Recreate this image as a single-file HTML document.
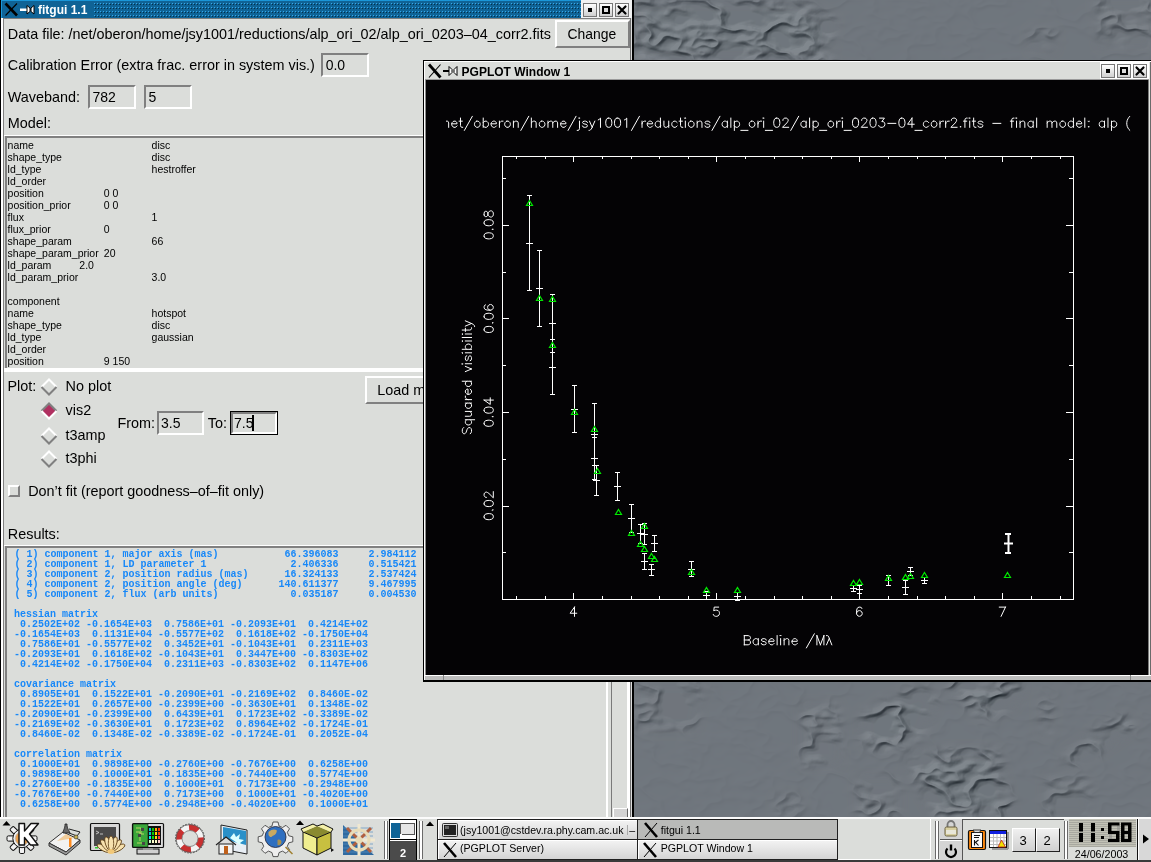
<!DOCTYPE html>
<html><head><meta charset="utf-8"><style>
html,body{margin:0;padding:0;width:1151px;height:862px;overflow:hidden;background:#70767d}
.t{position:absolute;white-space:pre;line-height:1;font-family:"Liberation Sans",sans-serif}
#desk{position:absolute;left:0;top:0;width:1151px;height:862px;background:#70767d}
#fit,#pg,#tb{position:absolute;left:0;top:0;will-change:transform}
#fit{width:634px;height:817px;overflow:hidden}
</style></head><body>
<div id="desk"><svg style="position:absolute;left:0;top:0" width="1151" height="862"><defs><filter id="emb" x="0" y="0" width="100%" height="100%" color-interpolation-filters="sRGB"><feTurbulence type="fractalNoise" baseFrequency="0.02 0.032" numOctaves="3" seed="5" result="n"/><feComponentTransfer in="n" result="t"><feFuncA type="table" tableValues="0 0 0 0 0 0.25 1 0.25 0 0 0 0 0"/></feComponentTransfer><feGaussianBlur in="t" stdDeviation="0.6" result="tb"/><feDiffuseLighting in="tb" surfaceScale="1.6" diffuseConstant="1.1" lighting-color="#fff" result="l"><feDistantLight azimuth="235" elevation="50"/></feDiffuseLighting><feColorMatrix in="l" type="matrix" values="0.52 0 0 0 0.0  0 0.52 0 0 0.025  0 0 0.52 0 0.05  0 0 0 0 1"/></filter><filter id="zb" x="-20%" y="-20%" width="140%" height="140%"><feGaussianBlur stdDeviation="5"/></filter><filter id="rb" x="-10%" y="-10%" width="120%" height="120%"><feGaussianBlur stdDeviation="0.45"/></filter><mask id="zm" maskUnits="userSpaceOnUse" x="0" y="0" width="1151" height="862"><rect width="1151" height="862" fill="#0c0c0c"/><g filter="url(#zb)"><path d="M634 0L800 0L835 20L830 62L634 62Z" fill="#fff" opacity="0.80"/><path d="M1095 0L1151 0L1151 45L1100 45Z" fill="#fff" opacity="0.56"/><path d="M1030 30L1055 30L1055 50L1030 50Z" fill="#fff" opacity="0.40"/><path d="M862 716L885 702L923 688L936 700L924 734L886 752L864 746Z" fill="#fff" opacity="0.80"/><path d="M945 682L1024 682L1013 706L989 718L972 711Z" fill="#fff" opacity="0.80"/><path d="M905 756L950 750L996 750L1006 785L1012 817L936 817L918 786Z" fill="#fff" opacity="0.80"/><path d="M1062 758L1100 728L1128 714L1136 726L1102 750L1070 766Z" fill="#fff" opacity="0.64"/><path d="M634 682L705 682L695 730L634 730Z" fill="#fff" opacity="0.40"/><path d="M802 705L838 705L840 765L802 765Z" fill="#fff" opacity="0.56"/><path d="M858 778L898 778L898 817L858 817Z" fill="#fff" opacity="0.56"/><path d="M1046 778L1088 778L1090 817L1046 817Z" fill="#fff" opacity="0.48"/><path d="M1040 700L1052 700L1052 735L1040 735Z" fill="#fff" opacity="0.40"/><path d="M776 796L800 796L800 817L776 817Z" fill="#fff" opacity="0.40"/></g></mask></defs><rect width="1151" height="862" filter="url(#emb)" mask="url(#zm)"/></svg></div>
<div id="fit">
<div style="position:absolute;left:0px;top:0px;width:634px;height:18px;background:#0f6396"></div>
<div style="position:absolute;left:1px;top:0px;width:632px;height:1px;background:#1a96d8"></div>
<div style="position:absolute;left:1px;top:0px;width:1px;height:18px;background:#1a96d8"></div>
<svg style="position:absolute;left:94px;top:1px" width="487" height="17"><defs><pattern id="tbd" width="3" height="4" patternUnits="userSpaceOnUse"><rect x="0" y="2" width="1" height="1" fill="#3aa8e8"/><rect x="1" y="3" width="1" height="1" fill="#073048"/></pattern></defs><rect width="487" height="17" fill="url(#tbd)"/></svg>
<div style="position:absolute;left:581px;top:0px;width:51px;height:18px;background:#f2f2f2"></div>
<div style="position:absolute;left:583px;top:3px;width:12px;height:12px;border:1px solid #777;background:linear-gradient(#fff,#cfcfcf)"></div>
<div style="position:absolute;left:599px;top:3px;width:12px;height:12px;border:1px solid #777;background:linear-gradient(#fff,#cfcfcf)"></div>
<div style="position:absolute;left:615px;top:3px;width:12px;height:12px;border:1px solid #777;background:linear-gradient(#fff,#cfcfcf)"></div>
<div style="position:absolute;left:588px;top:8px;width:4px;height:4px;background:#000"></div>
<div style="position:absolute;left:602px;top:6px;width:4px;height:4px;border:2px solid #000;background:#ddd"></div>
<svg style="position:absolute;left:616px;top:4px" width="12" height="12"><path d="M2.5 2.5L9.5 9.5M9.5 2.5L2.5 9.5" stroke="#000" stroke-width="2.2" stroke-linecap="round"/></svg>
<svg style="position:absolute;left:4px;top:2px" width="32" height="15"><path d="M1.5 1.5L13 13.5" stroke="#000" stroke-width="2.6"/><path d="M13 1.5L1.5 13.5" stroke="#000" stroke-width="1.1"/><rect x="16" y="6.5" width="7" height="2.5" fill="#fff"/><path d="M23 3.5L26 6V9.5L23 12ZM30 3.5L27 6V9.5L30 12Z" fill="#fff" stroke="#000" stroke-width="1"/></svg>
<div class="t" style="left:38px;top:4.14px;font-size:12px;color:#fff;font-weight:700;font-family:'Liberation Sans', sans-serif;">fitgui 1.1</div>
<div style="position:absolute;left:1px;top:18px;width:631px;height:850px;background:#dbddda"></div>
<div style="position:absolute;left:0px;top:0px;width:1px;height:862px;background:#000"></div>
<div style="position:absolute;left:632px;top:0px;width:2px;height:862px;background:#000"></div>
<div style="position:absolute;left:1px;top:18px;width:2px;height:850px;background:#fff"></div>
<div style="position:absolute;left:630px;top:18px;width:1px;height:850px;background:#707070"></div>
<div style="position:absolute;left:631px;top:18px;width:1px;height:850px;background:#dcdcdc"></div>
<div style="position:absolute;left:3px;top:18px;width:627px;height:1px;background:#808080"></div>
<div style="position:absolute;left:3px;top:18px;width:1px;height:850px;background:#808080"></div>
<div class="t" style="left:7.8px;top:26.61px;font-size:14.4px;color:#000;font-weight:400;font-family:'Liberation Sans', sans-serif;">Data file: /net/oberon/home/jsy1001/reductions/alp_ori_02/alp_ori_0203–04_corr2.fits</div>
<div style="position:absolute;left:555px;top:20px;width:71px;height:24px;border:2px solid;border-color:#fff #808080 #808080 #fff;background:#dbddda"></div>
<div class="t" style="left:567.5px;top:27.93px;font-size:13.9px;color:#000;font-weight:400;font-family:'Liberation Sans', sans-serif;">Change</div>
<div class="t" style="left:7.8px;top:57.51px;font-size:14.4px;color:#000;font-weight:400;font-family:'Liberation Sans', sans-serif;">Calibration Error (extra frac. error in system vis.)</div>
<div style="position:absolute;left:321px;top:53px;width:44px;height:20px;border:2px solid;border-color:#808080 #fff #fff #808080;background:#dbddda"></div>
<div class="t" style="left:325.7px;top:57.85px;font-size:14px;color:#000;font-weight:400;font-family:'Liberation Sans', sans-serif;">0.0</div>
<div class="t" style="left:7.8px;top:89.51px;font-size:14.4px;color:#000;font-weight:400;font-family:'Liberation Sans', sans-serif;">Waveband:</div>
<div style="position:absolute;left:88px;top:85px;width:44px;height:20px;border:2px solid;border-color:#808080 #fff #fff #808080;background:#dbddda"></div>
<div class="t" style="left:92.5px;top:89.85px;font-size:14px;color:#000;font-weight:400;font-family:'Liberation Sans', sans-serif;">782</div>
<div style="position:absolute;left:144px;top:85px;width:44px;height:20px;border:2px solid;border-color:#808080 #fff #fff #808080;background:#dbddda"></div>
<div class="t" style="left:148.5px;top:89.85px;font-size:14px;color:#000;font-weight:400;font-family:'Liberation Sans', sans-serif;">5</div>
<div class="t" style="left:7.8px;top:116.11px;font-size:14.4px;color:#000;font-weight:400;font-family:'Liberation Sans', sans-serif;">Model:</div>
<div style="position:absolute;left:4px;top:135px;width:626px;height:234px;border-top:1px solid #fff;border-bottom:2px solid #fff"></div>
<div style="position:absolute;left:5px;top:136px;width:625px;height:232px;border-top:2px solid #808080;border-left:2px solid #808080;box-sizing:border-box;overflow:hidden">
</div>
<div class="t" style="left:7.6px;top:139.61px;font-size:10.5px;color:#000;font-weight:400;font-family:'Liberation Sans', sans-serif;">name</div>
<div class="t" style="left:151.6px;top:139.61px;font-size:10.5px;color:#000;font-weight:400;font-family:'Liberation Sans', sans-serif;">disc</div>
<div class="t" style="left:7.6px;top:151.61px;font-size:10.5px;color:#000;font-weight:400;font-family:'Liberation Sans', sans-serif;">shape_type</div>
<div class="t" style="left:151.6px;top:151.61px;font-size:10.5px;color:#000;font-weight:400;font-family:'Liberation Sans', sans-serif;">disc</div>
<div class="t" style="left:7.6px;top:163.61px;font-size:10.5px;color:#000;font-weight:400;font-family:'Liberation Sans', sans-serif;">ld_type</div>
<div class="t" style="left:151.6px;top:163.61px;font-size:10.5px;color:#000;font-weight:400;font-family:'Liberation Sans', sans-serif;">hestroffer</div>
<div class="t" style="left:7.6px;top:175.61px;font-size:10.5px;color:#000;font-weight:400;font-family:'Liberation Sans', sans-serif;">ld_order</div>
<div class="t" style="left:7.6px;top:187.61px;font-size:10.5px;color:#000;font-weight:400;font-family:'Liberation Sans', sans-serif;">position</div>
<div class="t" style="left:103.8px;top:187.61px;font-size:10.5px;color:#000;font-weight:400;font-family:'Liberation Sans', sans-serif;">0 0</div>
<div class="t" style="left:7.6px;top:199.61px;font-size:10.5px;color:#000;font-weight:400;font-family:'Liberation Sans', sans-serif;">position_prior</div>
<div class="t" style="left:103.8px;top:199.61px;font-size:10.5px;color:#000;font-weight:400;font-family:'Liberation Sans', sans-serif;">0 0</div>
<div class="t" style="left:7.6px;top:211.61px;font-size:10.5px;color:#000;font-weight:400;font-family:'Liberation Sans', sans-serif;">flux</div>
<div class="t" style="left:151.6px;top:211.61px;font-size:10.5px;color:#000;font-weight:400;font-family:'Liberation Sans', sans-serif;">1</div>
<div class="t" style="left:7.6px;top:223.61px;font-size:10.5px;color:#000;font-weight:400;font-family:'Liberation Sans', sans-serif;">flux_prior</div>
<div class="t" style="left:103.8px;top:223.61px;font-size:10.5px;color:#000;font-weight:400;font-family:'Liberation Sans', sans-serif;">0</div>
<div class="t" style="left:7.6px;top:235.61px;font-size:10.5px;color:#000;font-weight:400;font-family:'Liberation Sans', sans-serif;">shape_param</div>
<div class="t" style="left:151.6px;top:235.61px;font-size:10.5px;color:#000;font-weight:400;font-family:'Liberation Sans', sans-serif;">66</div>
<div class="t" style="left:7.6px;top:247.61px;font-size:10.5px;color:#000;font-weight:400;font-family:'Liberation Sans', sans-serif;">shape_param_prior</div>
<div class="t" style="left:103.8px;top:247.61px;font-size:10.5px;color:#000;font-weight:400;font-family:'Liberation Sans', sans-serif;">20</div>
<div class="t" style="left:7.6px;top:259.61px;font-size:10.5px;color:#000;font-weight:400;font-family:'Liberation Sans', sans-serif;">ld_param</div>
<div class="t" style="left:79.3px;top:259.61px;font-size:10.5px;color:#000;font-weight:400;font-family:'Liberation Sans', sans-serif;">2.0</div>
<div class="t" style="left:7.6px;top:271.61px;font-size:10.5px;color:#000;font-weight:400;font-family:'Liberation Sans', sans-serif;">ld_param_prior</div>
<div class="t" style="left:151.6px;top:271.61px;font-size:10.5px;color:#000;font-weight:400;font-family:'Liberation Sans', sans-serif;">3.0</div>
<div class="t" style="left:7.6px;top:295.61px;font-size:10.5px;color:#000;font-weight:400;font-family:'Liberation Sans', sans-serif;">component</div>
<div class="t" style="left:7.6px;top:307.61px;font-size:10.5px;color:#000;font-weight:400;font-family:'Liberation Sans', sans-serif;">name</div>
<div class="t" style="left:151.6px;top:307.61px;font-size:10.5px;color:#000;font-weight:400;font-family:'Liberation Sans', sans-serif;">hotspot</div>
<div class="t" style="left:7.6px;top:319.61px;font-size:10.5px;color:#000;font-weight:400;font-family:'Liberation Sans', sans-serif;">shape_type</div>
<div class="t" style="left:151.6px;top:319.61px;font-size:10.5px;color:#000;font-weight:400;font-family:'Liberation Sans', sans-serif;">disc</div>
<div class="t" style="left:7.6px;top:331.61px;font-size:10.5px;color:#000;font-weight:400;font-family:'Liberation Sans', sans-serif;">ld_type</div>
<div class="t" style="left:151.6px;top:331.61px;font-size:10.5px;color:#000;font-weight:400;font-family:'Liberation Sans', sans-serif;">gaussian</div>
<div class="t" style="left:7.6px;top:343.61px;font-size:10.5px;color:#000;font-weight:400;font-family:'Liberation Sans', sans-serif;">ld_order</div>
<div class="t" style="left:7.6px;top:355.61px;font-size:10.5px;color:#000;font-weight:400;font-family:'Liberation Sans', sans-serif;">position</div>
<div class="t" style="left:103.8px;top:355.61px;font-size:10.5px;color:#000;font-weight:400;font-family:'Liberation Sans', sans-serif;">9 150</div>
<div style="position:absolute;left:4px;top:368px;width:626px;height:2px;background:#fff"></div>
<div class="t" style="left:7.5px;top:378.71px;font-size:14.4px;color:#000;font-weight:400;font-family:'Liberation Sans', sans-serif;">Plot:</div>
<svg style="position:absolute;left:40px;top:378.4px" width="18" height="18"><path d="M1.5 9L9 1.5L16.5 9" fill="none" stroke="#fff" stroke-width="2"/><path d="M1.5 9L9 16.5L16.5 9" fill="none" stroke="#808080" stroke-width="2"/></svg>
<div class="t" style="left:65.6px;top:379.31px;font-size:14.4px;color:#000;font-weight:400;font-family:'Liberation Sans', sans-serif;">No plot</div>
<svg style="position:absolute;left:40px;top:402.2px" width="18" height="18"><path d="M9 1.5L16.5 9L9 16.5L1.5 9Z" fill="#b03060"/><path d="M1.5 9L9 1.5L16.5 9" fill="none" stroke="#808080" stroke-width="2"/><path d="M1.5 9L9 16.5L16.5 9" fill="none" stroke="#fff" stroke-width="2"/></svg>
<div class="t" style="left:65.6px;top:403.11px;font-size:14.4px;color:#000;font-weight:400;font-family:'Liberation Sans', sans-serif;">vis2</div>
<svg style="position:absolute;left:40px;top:426.6px" width="18" height="18"><path d="M1.5 9L9 1.5L16.5 9" fill="none" stroke="#fff" stroke-width="2"/><path d="M1.5 9L9 16.5L16.5 9" fill="none" stroke="#808080" stroke-width="2"/></svg>
<div class="t" style="left:65.6px;top:427.51px;font-size:14.4px;color:#000;font-weight:400;font-family:'Liberation Sans', sans-serif;">t3amp</div>
<svg style="position:absolute;left:40px;top:450.4px" width="18" height="18"><path d="M1.5 9L9 1.5L16.5 9" fill="none" stroke="#fff" stroke-width="2"/><path d="M1.5 9L9 16.5L16.5 9" fill="none" stroke="#808080" stroke-width="2"/></svg>
<div class="t" style="left:65.6px;top:451.31px;font-size:14.4px;color:#000;font-weight:400;font-family:'Liberation Sans', sans-serif;">t3phi</div>
<div class="t" style="left:117.5px;top:415.61px;font-size:14.4px;color:#000;font-weight:400;font-family:'Liberation Sans', sans-serif;">From:</div>
<div style="position:absolute;left:157px;top:411px;width:43px;height:20px;border:2px solid;border-color:#808080 #fff #fff #808080;background:#dbddda"></div>
<div class="t" style="left:161px;top:415.95px;font-size:14px;color:#000;font-weight:400;font-family:'Liberation Sans', sans-serif;">3.5</div>
<div class="t" style="left:207.7px;top:415.61px;font-size:14.4px;color:#000;font-weight:400;font-family:'Liberation Sans', sans-serif;">To:</div>
<div style="position:absolute;left:230px;top:411px;width:46px;height:22px;border:1px solid #000"></div>
<div style="position:absolute;left:231px;top:412px;width:42px;height:18px;border:2px solid;border-color:#808080 #fff #fff #808080;background:#dbddda"></div>
<div class="t" style="left:234px;top:415.95px;font-size:14px;color:#000;font-weight:400;font-family:'Liberation Sans', sans-serif;">7.5</div>
<div style="position:absolute;left:252px;top:415px;width:2px;height:16px;background:#000"></div>
<div style="position:absolute;left:365px;top:376px;width:66px;height:24px;border:2px solid;border-color:#fff #808080 #808080 #fff;background:#dbddda"></div>
<div class="t" style="left:377.2px;top:382.61px;font-size:14.4px;color:#000;font-weight:400;font-family:'Liberation Sans', sans-serif;">Load model</div>
<div style="position:absolute;left:8px;top:485px;width:8px;height:8px;border:2px solid;border-color:#fff #808080 #808080 #fff;background:#dbddda"></div>
<div class="t" style="left:28.2px;top:483.71px;font-size:14.4px;color:#000;font-weight:400;font-family:'Liberation Sans', sans-serif;">Don’t fit (report goodness–of–fit only)</div>
<div class="t" style="left:7.8px;top:527.21px;font-size:14.4px;color:#000;font-weight:400;font-family:'Liberation Sans', sans-serif;">Results:</div>
<div style="position:absolute;left:4px;top:545px;width:626px;height:300px;border-top:1px solid #fff"></div>
<div style="position:absolute;left:5px;top:546px;width:625px;height:300px;border-top:2px solid #808080;border-left:2px solid #808080;box-sizing:border-box"></div>
<div style="position:absolute;left:606px;top:546px;width:2px;height:300px;background:#fff"></div>
<div style="position:absolute;left:611px;top:546px;width:1px;height:300px;background:#7a7a7a"></div>
<div style="position:absolute;left:627px;top:546px;width:3px;height:300px;background:#fff"></div>
<div style="position:absolute;left:613px;top:808px;width:13px;height:12px;border-top:1px solid #fff;border-left:1px solid #fff;border-right:1px solid #666;background:#d4d4d4"></div>
<div class="t" style="left:14.5px;top:550.04px;font-size:10px;color:#1888f8;font-weight:700;font-family:'Liberation Mono', monospace;">(&#160;1)&#160;component&#160;1,&#160;major&#160;axis&#160;(mas)&#160;&#160;&#160;&#160;&#160;&#160;&#160;&#160;&#160;&#160;&#160;66.396083&#160;&#160;&#160;&#160;&#160;2.984112</div>
<div class="t" style="left:14.5px;top:560.04px;font-size:10px;color:#1888f8;font-weight:700;font-family:'Liberation Mono', monospace;">(&#160;2)&#160;component&#160;1,&#160;LD&#160;parameter&#160;1&#160;&#160;&#160;&#160;&#160;&#160;&#160;&#160;&#160;&#160;&#160;&#160;&#160;&#160;2.406336&#160;&#160;&#160;&#160;&#160;0.515421</div>
<div class="t" style="left:14.5px;top:570.04px;font-size:10px;color:#1888f8;font-weight:700;font-family:'Liberation Mono', monospace;">(&#160;3)&#160;component&#160;2,&#160;position&#160;radius&#160;(mas)&#160;&#160;&#160;&#160;&#160;&#160;16.324133&#160;&#160;&#160;&#160;&#160;2.537424</div>
<div class="t" style="left:14.5px;top:580.04px;font-size:10px;color:#1888f8;font-weight:700;font-family:'Liberation Mono', monospace;">(&#160;4)&#160;component&#160;2,&#160;position&#160;angle&#160;(deg)&#160;&#160;&#160;&#160;&#160;&#160;140.611377&#160;&#160;&#160;&#160;&#160;9.467995</div>
<div class="t" style="left:14.5px;top:590.04px;font-size:10px;color:#1888f8;font-weight:700;font-family:'Liberation Mono', monospace;">(&#160;5)&#160;component&#160;2,&#160;flux&#160;(arb&#160;units)&#160;&#160;&#160;&#160;&#160;&#160;&#160;&#160;&#160;&#160;&#160;&#160;0.035187&#160;&#160;&#160;&#160;&#160;0.004530</div>
<div class="t" style="left:14px;top:610.04px;font-size:10px;color:#1888f8;font-weight:700;font-family:'Liberation Mono', monospace;">hessian&#160;matrix</div>
<div class="t" style="left:14px;top:620.04px;font-size:10px;color:#1888f8;font-weight:700;font-family:'Liberation Mono', monospace;">&#160;0.2502E+02&#160;-0.1654E+03&#160;&#160;0.7586E+01&#160;-0.2093E+01&#160;&#160;0.4214E+02</div>
<div class="t" style="left:14px;top:630.04px;font-size:10px;color:#1888f8;font-weight:700;font-family:'Liberation Mono', monospace;">-0.1654E+03&#160;&#160;0.1131E+04&#160;-0.5577E+02&#160;&#160;0.1618E+02&#160;-0.1750E+04</div>
<div class="t" style="left:14px;top:640.04px;font-size:10px;color:#1888f8;font-weight:700;font-family:'Liberation Mono', monospace;">&#160;0.7586E+01&#160;-0.5577E+02&#160;&#160;0.3452E+01&#160;-0.1043E+01&#160;&#160;0.2311E+03</div>
<div class="t" style="left:14px;top:650.04px;font-size:10px;color:#1888f8;font-weight:700;font-family:'Liberation Mono', monospace;">-0.2093E+01&#160;&#160;0.1618E+02&#160;-0.1043E+01&#160;&#160;0.3447E+00&#160;-0.8303E+02</div>
<div class="t" style="left:14px;top:660.04px;font-size:10px;color:#1888f8;font-weight:700;font-family:'Liberation Mono', monospace;">&#160;0.4214E+02&#160;-0.1750E+04&#160;&#160;0.2311E+03&#160;-0.8303E+02&#160;&#160;0.1147E+06</div>
<div class="t" style="left:14px;top:680.04px;font-size:10px;color:#1888f8;font-weight:700;font-family:'Liberation Mono', monospace;">covariance&#160;matrix</div>
<div class="t" style="left:14px;top:690.04px;font-size:10px;color:#1888f8;font-weight:700;font-family:'Liberation Mono', monospace;">&#160;0.8905E+01&#160;&#160;0.1522E+01&#160;-0.2090E+01&#160;-0.2169E+02&#160;&#160;0.8460E-02</div>
<div class="t" style="left:14px;top:700.04px;font-size:10px;color:#1888f8;font-weight:700;font-family:'Liberation Mono', monospace;">&#160;0.1522E+01&#160;&#160;0.2657E+00&#160;-0.2399E+00&#160;-0.3630E+01&#160;&#160;0.1348E-02</div>
<div class="t" style="left:14px;top:710.04px;font-size:10px;color:#1888f8;font-weight:700;font-family:'Liberation Mono', monospace;">-0.2090E+01&#160;-0.2399E+00&#160;&#160;0.6439E+01&#160;&#160;0.1723E+02&#160;-0.3389E-02</div>
<div class="t" style="left:14px;top:720.04px;font-size:10px;color:#1888f8;font-weight:700;font-family:'Liberation Mono', monospace;">-0.2169E+02&#160;-0.3630E+01&#160;&#160;0.1723E+02&#160;&#160;0.8964E+02&#160;-0.1724E-01</div>
<div class="t" style="left:14px;top:730.04px;font-size:10px;color:#1888f8;font-weight:700;font-family:'Liberation Mono', monospace;">&#160;0.8460E-02&#160;&#160;0.1348E-02&#160;-0.3389E-02&#160;-0.1724E-01&#160;&#160;0.2052E-04</div>
<div class="t" style="left:14px;top:750.04px;font-size:10px;color:#1888f8;font-weight:700;font-family:'Liberation Mono', monospace;">correlation&#160;matrix</div>
<div class="t" style="left:14px;top:760.04px;font-size:10px;color:#1888f8;font-weight:700;font-family:'Liberation Mono', monospace;">&#160;0.1000E+01&#160;&#160;0.9898E+00&#160;-0.2760E+00&#160;-0.7676E+00&#160;&#160;0.6258E+00</div>
<div class="t" style="left:14px;top:770.04px;font-size:10px;color:#1888f8;font-weight:700;font-family:'Liberation Mono', monospace;">&#160;0.9898E+00&#160;&#160;0.1000E+01&#160;-0.1835E+00&#160;-0.7440E+00&#160;&#160;0.5774E+00</div>
<div class="t" style="left:14px;top:780.04px;font-size:10px;color:#1888f8;font-weight:700;font-family:'Liberation Mono', monospace;">-0.2760E+00&#160;-0.1835E+00&#160;&#160;0.1000E+01&#160;&#160;0.7173E+00&#160;-0.2948E+00</div>
<div class="t" style="left:14px;top:790.04px;font-size:10px;color:#1888f8;font-weight:700;font-family:'Liberation Mono', monospace;">-0.7676E+00&#160;-0.7440E+00&#160;&#160;0.7173E+00&#160;&#160;0.1000E+01&#160;-0.4020E+00</div>
<div class="t" style="left:14px;top:800.04px;font-size:10px;color:#1888f8;font-weight:700;font-family:'Liberation Mono', monospace;">&#160;0.6258E+00&#160;&#160;0.5774E+00&#160;-0.2948E+00&#160;-0.4020E+00&#160;&#160;0.1000E+01</div>
</div>
<div id="pg">
<div style="position:absolute;left:423px;top:60px;width:728px;height:622px;background:#000"></div>
<div style="position:absolute;left:424px;top:61px;width:727px;height:620px;background:#fff"></div>
<div style="position:absolute;left:425px;top:62px;width:726px;height:618px;background:#dbddda"></div>
<svg style="position:absolute;left:427px;top:63px" width="34" height="16"><path d="M2 1.5L13.5 14.5" stroke="#000" stroke-width="2.8"/><path d="M13.5 1.5L2 14.5" stroke="#000" stroke-width="1.1"/><rect x="16" y="7" width="6" height="2" fill="#000"/><path d="M22 3.5L25 6.5V9.5L22 12.5ZM30 3.5L27 6.5V9.5L30 12.5Z" fill="#fff" stroke="#000" stroke-width="1"/></svg>
<div class="t" style="left:461.6px;top:65.54px;font-size:12px;color:#000;font-weight:700;font-family:'Liberation Sans', sans-serif;">PGPLOT Window 1</div>
<div style="position:absolute;left:1100px;top:61px;width:51px;height:19px;background:#fff"></div>
<div style="position:absolute;left:1101px;top:64px;width:12px;height:12px;border:1px solid #777;background:linear-gradient(#fff,#d0d0d0)"></div>
<div style="position:absolute;left:1117px;top:64px;width:12px;height:12px;border:1px solid #777;background:linear-gradient(#fff,#d0d0d0)"></div>
<div style="position:absolute;left:1133px;top:64px;width:12px;height:12px;border:1px solid #777;background:linear-gradient(#fff,#d0d0d0)"></div>
<div style="position:absolute;left:1106px;top:69px;width:4px;height:4px;background:#000"></div>
<div style="position:absolute;left:1120px;top:67px;width:4px;height:4px;border:2px solid #000;background:#ddd"></div>
<svg style="position:absolute;left:1134px;top:65px" width="12" height="12"><path d="M2.5 2.5L9.5 9.5M9.5 2.5L2.5 9.5" stroke="#000" stroke-width="2.2" stroke-linecap="round"/></svg>
<div style="position:absolute;left:425px;top:79px;width:724px;height:1px;background:#9a9a9a"></div>
<div style="position:absolute;left:425px;top:80px;width:1px;height:595px;background:#8a8a8a"></div>
<div style="position:absolute;left:426px;top:80px;width:722px;height:595px;background:#040305"></div>
<div style="position:absolute;left:1148px;top:80px;width:1px;height:595px;background:#7a7a7a"></div>
<div style="position:absolute;left:1149px;top:62px;width:1px;height:618px;background:#e4e6e3"></div>
<div style="position:absolute;left:1150px;top:62px;width:1px;height:618px;background:#6a6a6a"></div>
<div style="position:absolute;left:425px;top:675px;width:726px;height:1px;background:#fff"></div>
<div style="position:absolute;left:425px;top:676px;width:726px;height:4px;background:#bdbdbd"></div>
<div style="position:absolute;left:443px;top:675px;width:1px;height:5px;background:#888"></div>
<div style="position:absolute;left:1130px;top:675px;width:1px;height:5px;background:#888"></div>
<div style="position:absolute;left:424px;top:680px;width:727px;height:2px;background:#000"></div>
<svg style="position:absolute;left:427px;top:80px" width="721" height="595" viewBox="427 80 721 595"><defs><clipPath id="tc"><rect x="446" y="80" width="684.5" height="60"/></clipPath></defs><g stroke="#fff" stroke-width="1" fill="none" shape-rendering="crispEdges"><rect x="502.5" y="156.5" width="570.5" height="442.5"/><path d="M516.5 598.5v-3M516.5 156v3M545.5 598.5v-3M545.5 156v3M573.5 598.5v-6M573.5 156v6M602.5 598.5v-3M602.5 156v3M631.5 598.5v-3M631.5 156v3M659.5 598.5v-3M659.5 156v3M688.5 598.5v-3M688.5 156v3M716.5 598.5v-6M716.5 156v6M745.5 598.5v-3M745.5 156v3M774.5 598.5v-3M774.5 156v3M802.5 598.5v-3M802.5 156v3M831.5 598.5v-3M831.5 156v3M859.5 598.5v-6M859.5 156v6M888.5 598.5v-3M888.5 156v3M917.5 598.5v-3M917.5 156v3M945.5 598.5v-3M945.5 156v3M974.5 598.5v-3M974.5 156v3M1002.5 598.5v-6M1002.5 156v6M1031.5 598.5v-3M1031.5 156v3M1060.5 598.5v-3M1060.5 156v3M502 552.5h4M1072.5 552.5h-4M502 506.5h7M1072.5 506.5h-7M502 459.5h4M1072.5 459.5h-4M502 412.5h7M1072.5 412.5h-7M502 365.5h4M1072.5 365.5h-4M502 318.5h7M1072.5 318.5h-7M502 272.5h4M1072.5 272.5h-4M502 225.5h7M1072.5 225.5h-7M502 178.5h4M1072.5 178.5h-4"/><path d="M529.5 195.5V290.5M527 195.5h5M527 290.5h5M526 243.5h7M539.5 250.5V326.5M537 250.5h5M537 326.5h5M536 288.5h7M552.5 294.5V352.5M550 294.5h5M550 352.5h5M549 323.5h7M552.5 339.5V394.5M550 339.5h5M550 394.5h5M549 367.5h7M574.5 385.5V432.5M572 385.5h5M572 432.5h5M571 409.5h7M594.5 403.5V465.5M592 403.5h5M592 465.5h5M591 434.5h7M594.5 437.5V479.5M592 437.5h5M592 479.5h5M591 458.5h7M596.5 465.5V495.5M594 465.5h5M594 495.5h5M593 480.5h7M617.5 472.5V500.5M615 472.5h5M615 500.5h5M614 486.5h7M631.5 504.5V532.5M629 504.5h5M629 532.5h5M628 518.5h7M640.5 524.5V543.5M638 524.5h5M638 543.5h5M637 533.5h7M644.5 523.5V544.5M642 523.5h5M642 544.5h5M641 534.5h7M644.5 553.5V569.5M642 553.5h5M642 569.5h5M641 561.5h7M654.5 535.5V551.5M652 535.5h5M652 551.5h5M651 543.5h7M651.5 564.5V575.5M649 564.5h5M649 575.5h5M648 569.5h7M691.5 561.5V576.5M689 561.5h5M689 576.5h5M688 569.5h7M706.5 591.5V599.5M704 591.5h5M704 599.5h5M703 595.5h7M737.5 592.5V600.5M735 592.5h5M735 600.5h5M734 596.5h7M853.5 585.5V591.5M851 585.5h5M851 591.5h5M850 588.5h7M859.5 585.5V593.5M857 585.5h5M857 593.5h5M856 589.5h7M888.5 575.5V585.5M886 575.5h5M886 585.5h5M885 580.5h7M905.5 580.5V594.5M903 580.5h5M903 594.5h5M902 587.5h7M910.5 567.5V575.5M908 567.5h5M908 575.5h5M907 571.5h7M924.5 577.5V583.5M922 577.5h5M922 583.5h5M921 580.5h7"/></g><path d="M1008.5 534V553M1005 534h6M1005 553h6M1004 543.5h9" stroke="#fff" stroke-width="2" fill="none"/><path d="M529.5 200.5L532.5 205.5H526.5ZM539.5 295.5L542.5 300.5H536.5ZM552.5 296.5L555.5 301.5H549.5ZM552.5 342.5L555.5 347.5H549.5ZM574.5 409.5L577.5 414.5H571.5ZM594.5 426.5L597.5 431.5H591.5ZM597.5 468.5L600.5 473.5H594.5ZM618.5 509.5L621.5 514.5H615.5ZM631.5 530.5L634.5 535.5H628.5ZM640.5 541.5L643.5 546.5H637.5ZM644.5 523.5L647.5 528.5H641.5ZM644.5 546.5L647.5 551.5H641.5ZM651.5 553.5L654.5 558.5H648.5ZM654.5 556.5L657.5 561.5H651.5ZM691.5 569.5L694.5 574.5H688.5ZM706.5 587.5L709.5 592.5H703.5ZM737.5 587.5L740.5 592.5H734.5ZM853.5 580.5L856.5 585.5H850.5ZM859.5 579.5L862.5 584.5H856.5ZM888.5 575.5L891.5 580.5H885.5ZM905.5 574.5L908.5 579.5H902.5ZM910.5 573.5L913.5 578.5H907.5ZM924.5 572.5L927.5 577.5H921.5ZM1007.5 572.5L1010.5 577.5H1004.5Z" stroke="#00e800" stroke-width="1.2" fill="none"/><g stroke="#fff" stroke-width="1" fill="none" stroke-linecap="square"><path clip-path="url(#tc)" d="M443.85 121.17L443.85 127.30M443.85 122.92L445.16 121.61L446.04 121.17L447.35 121.17L448.23 121.61L448.66 122.92L448.66 127.30M451.73 123.80L456.98 123.80L456.98 122.92L456.54 122.05L456.10 121.61L455.23 121.17L453.91 121.17L453.04 121.61L452.16 122.49L451.73 123.80L451.73 124.67L452.16 125.99L453.04 126.86L453.91 127.30L455.23 127.30L456.10 126.86L456.98 125.99M460.48 118.11L460.48 125.55L460.91 126.86L461.79 127.30L462.66 127.30M459.16 121.17L462.23 121.17M472.29 116.36L464.41 130.36M476.66 121.17L475.79 121.61L474.91 122.49L474.48 123.80L474.48 124.67L474.91 125.99L475.79 126.86L476.66 127.30L477.98 127.30L478.85 126.86L479.73 125.99L480.16 124.67L480.16 123.80L479.73 122.49L478.85 121.61L477.98 121.17L476.66 121.17M483.23 118.11L483.23 127.30M483.23 122.49L484.10 121.61L484.98 121.17L486.29 121.17L487.16 121.61L488.04 122.49L488.48 123.80L488.48 124.67L488.04 125.99L487.16 126.86L486.29 127.30L484.98 127.30L484.10 126.86L483.23 125.99M491.10 123.80L496.35 123.80L496.35 122.92L495.91 122.05L495.48 121.61L494.60 121.17L493.29 121.17L492.41 121.61L491.54 122.49L491.10 123.80L491.10 124.67L491.54 125.99L492.41 126.86L493.29 127.30L494.60 127.30L495.48 126.86L496.35 125.99M499.41 121.17L499.41 127.30M499.41 123.80L499.85 122.49L500.73 121.61L501.60 121.17L502.91 121.17M506.85 121.17L505.98 121.61L505.10 122.49L504.66 123.80L504.66 124.67L505.10 125.99L505.98 126.86L506.85 127.30L508.16 127.30L509.04 126.86L509.91 125.99L510.35 124.67L510.35 123.80L509.91 122.49L509.04 121.61L508.16 121.17L506.85 121.17M513.41 121.17L513.41 127.30M513.41 122.92L514.73 121.61L515.60 121.17L516.91 121.17L517.79 121.61L518.23 122.92L518.23 127.30M528.73 116.36L520.85 130.36M531.35 118.11L531.35 127.30M531.35 122.92L532.66 121.61L533.54 121.17L534.85 121.17L535.73 121.61L536.16 122.92L536.16 127.30M541.41 121.17L540.54 121.61L539.66 122.49L539.23 123.80L539.23 124.67L539.66 125.99L540.54 126.86L541.41 127.30L542.73 127.30L543.60 126.86L544.48 125.99L544.91 124.67L544.91 123.80L544.48 122.49L543.60 121.61L542.73 121.17L541.41 121.17M547.98 121.17L547.98 127.30M547.98 122.92L549.29 121.61L550.16 121.17L551.48 121.17L552.35 121.61L552.79 122.92L552.79 127.30M552.79 122.92L554.10 121.61L554.98 121.17L556.29 121.17L557.16 121.61L557.60 122.92L557.60 127.30M560.66 123.80L565.91 123.80L565.91 122.92L565.48 122.05L565.04 121.61L564.16 121.17L562.85 121.17L561.98 121.61L561.10 122.49L560.66 123.80L560.66 124.67L561.10 125.99L561.98 126.86L562.85 127.30L564.16 127.30L565.04 126.86L565.91 125.99M575.98 116.36L568.10 130.36M579.04 118.11L579.48 118.55L579.91 118.11L579.48 117.67L579.04 118.11M579.48 121.17L579.48 128.61L579.04 129.93L578.16 130.36L577.29 130.36M587.35 122.49L586.91 121.61L585.60 121.17L584.29 121.17L582.98 121.61L582.54 122.49L582.98 123.36L583.85 123.80L586.04 124.24L586.91 124.67L587.35 125.55L587.35 125.99L586.91 126.86L585.60 127.30L584.29 127.30L582.98 126.86L582.54 125.99M589.54 121.17L592.16 127.30M594.79 121.17L592.16 127.30L591.29 129.05L590.41 129.93L589.54 130.36L589.10 130.36M598.29 119.86L599.16 119.42L600.48 118.11L600.48 127.30M608.35 118.11L607.04 118.55L606.16 119.86L605.73 122.05L605.73 123.36L606.16 125.55L607.04 126.86L608.35 127.30L609.23 127.30L610.54 126.86L611.41 125.55L611.85 123.36L611.85 122.05L611.41 119.86L610.54 118.55L609.23 118.11L608.35 118.11M617.10 118.11L615.79 118.55L614.91 119.86L614.48 122.05L614.48 123.36L614.91 125.55L615.79 126.86L617.10 127.30L617.98 127.30L619.29 126.86L620.16 125.55L620.60 123.36L620.60 122.05L620.16 119.86L619.29 118.55L617.98 118.11L617.10 118.11M624.54 119.86L625.41 119.42L626.73 118.11L626.73 127.30M639.41 116.36L631.54 130.36M642.04 121.17L642.04 127.30M642.04 123.80L642.48 122.49L643.35 121.61L644.23 121.17L645.54 121.17M647.29 123.80L652.54 123.80L652.54 122.92L652.10 122.05L651.66 121.61L650.79 121.17L649.48 121.17L648.60 121.61L647.73 122.49L647.29 123.80L647.29 124.67L647.73 125.99L648.60 126.86L649.48 127.30L650.79 127.30L651.66 126.86L652.54 125.99M660.41 118.11L660.41 127.30M660.41 122.49L659.54 121.61L658.66 121.17L657.35 121.17L656.48 121.61L655.60 122.49L655.16 123.80L655.16 124.67L655.60 125.99L656.48 126.86L657.35 127.30L658.66 127.30L659.54 126.86L660.41 125.99M663.91 121.17L663.91 125.55L664.35 126.86L665.23 127.30L666.54 127.30L667.41 126.86L668.73 125.55M668.73 121.17L668.73 127.30M677.04 122.49L676.16 121.61L675.29 121.17L673.98 121.17L673.10 121.61L672.23 122.49L671.79 123.80L671.79 124.67L672.23 125.99L673.10 126.86L673.98 127.30L675.29 127.30L676.16 126.86L677.04 125.99M680.54 118.11L680.54 125.55L680.98 126.86L681.85 127.30L682.73 127.30M679.23 121.17L682.29 121.17M684.91 118.11L685.35 118.55L685.79 118.11L685.35 117.67L684.91 118.11M685.35 121.17L685.35 127.30M690.60 121.17L689.73 121.61L688.85 122.49L688.41 123.80L688.41 124.67L688.85 125.99L689.73 126.86L690.60 127.30L691.91 127.30L692.79 126.86L693.66 125.99L694.10 124.67L694.10 123.80L693.66 122.49L692.79 121.61L691.91 121.17L690.60 121.17M697.16 121.17L697.16 127.30M697.16 122.92L698.48 121.61L699.35 121.17L700.66 121.17L701.54 121.61L701.98 122.92L701.98 127.30M709.85 122.49L709.41 121.61L708.10 121.17L706.79 121.17L705.48 121.61L705.04 122.49L705.48 123.36L706.35 123.80L708.54 124.24L709.41 124.67L709.85 125.55L709.85 125.99L709.41 126.86L708.10 127.30L706.79 127.30L705.48 126.86L705.04 125.99M719.91 116.36L712.04 130.36M727.35 121.17L727.35 127.30M727.35 122.49L726.48 121.61L725.60 121.17L724.29 121.17L723.41 121.61L722.54 122.49L722.10 123.80L722.10 124.67L722.54 125.99L723.41 126.86L724.29 127.30L725.60 127.30L726.48 126.86L727.35 125.99M730.85 118.11L730.85 127.30M734.35 121.17L734.35 130.36M734.35 122.49L735.23 121.61L736.10 121.17L737.41 121.17L738.29 121.61L739.16 122.49L739.60 123.80L739.60 124.67L739.16 125.99L738.29 126.86L737.41 127.30L736.10 127.30L735.23 126.86L734.35 125.99M740.91 130.36L747.91 130.36M751.41 121.17L750.54 121.61L749.66 122.49L749.23 123.80L749.23 124.67L749.66 125.99L750.54 126.86L751.41 127.30L752.73 127.30L753.60 126.86L754.48 125.99L754.91 124.67L754.91 123.80L754.48 122.49L753.60 121.61L752.73 121.17L751.41 121.17M757.98 121.17L757.98 127.30M757.98 123.80L758.41 122.49L759.29 121.61L760.16 121.17L761.48 121.17M763.23 118.11L763.66 118.55L764.10 118.11L763.66 117.67L763.23 118.11M763.66 121.17L763.66 127.30M765.41 130.36L772.41 130.36M776.35 118.11L775.04 118.55L774.16 119.86L773.73 122.05L773.73 123.36L774.16 125.55L775.04 126.86L776.35 127.30L777.23 127.30L778.54 126.86L779.41 125.55L779.85 123.36L779.85 122.05L779.41 119.86L778.54 118.55L777.23 118.11L776.35 118.11M782.91 120.30L782.91 119.86L783.35 118.99L783.79 118.55L784.66 118.11L786.41 118.11L787.29 118.55L787.73 118.99L788.16 119.86L788.16 120.74L787.73 121.61L786.85 122.92L782.48 127.30L788.60 127.30M798.66 116.36L790.79 130.36M806.10 121.17L806.10 127.30M806.10 122.49L805.23 121.61L804.35 121.17L803.04 121.17L802.16 121.61L801.29 122.49L800.85 123.80L800.85 124.67L801.29 125.99L802.16 126.86L803.04 127.30L804.35 127.30L805.23 126.86L806.10 125.99M809.60 118.11L809.60 127.30M813.10 121.17L813.10 130.36M813.10 122.49L813.98 121.61L814.85 121.17L816.16 121.17L817.04 121.61L817.91 122.49L818.35 123.80L818.35 124.67L817.91 125.99L817.04 126.86L816.16 127.30L814.85 127.30L813.98 126.86L813.10 125.99M819.66 130.36L826.66 130.36M830.16 121.17L829.29 121.61L828.41 122.49L827.98 123.80L827.98 124.67L828.41 125.99L829.29 126.86L830.16 127.30L831.48 127.30L832.35 126.86L833.23 125.99L833.66 124.67L833.66 123.80L833.23 122.49L832.35 121.61L831.48 121.17L830.16 121.17M836.73 121.17L836.73 127.30M836.73 123.80L837.16 122.49L838.04 121.61L838.91 121.17L840.23 121.17M841.98 118.11L842.41 118.55L842.85 118.11L842.41 117.67L841.98 118.11M842.41 121.17L842.41 127.30M844.16 130.36L851.16 130.36M855.10 118.11L853.79 118.55L852.91 119.86L852.48 122.05L852.48 123.36L852.91 125.55L853.79 126.86L855.10 127.30L855.98 127.30L857.29 126.86L858.16 125.55L858.60 123.36L858.60 122.05L858.16 119.86L857.29 118.55L855.98 118.11L855.10 118.11M861.66 120.30L861.66 119.86L862.10 118.99L862.54 118.55L863.41 118.11L865.16 118.11L866.04 118.55L866.48 118.99L866.91 119.86L866.91 120.74L866.48 121.61L865.60 122.92L861.23 127.30L867.35 127.30M872.60 118.11L871.29 118.55L870.41 119.86L869.98 122.05L869.98 123.36L870.41 125.55L871.29 126.86L872.60 127.30L873.48 127.30L874.79 126.86L875.66 125.55L876.10 123.36L876.10 122.05L875.66 119.86L874.79 118.55L873.48 118.11L872.60 118.11M879.60 118.11L884.41 118.11L881.79 121.61L883.10 121.61L883.98 122.05L884.41 122.49L884.85 123.80L884.85 124.67L884.41 125.99L883.54 126.86L882.23 127.30L880.91 127.30L879.60 126.86L879.16 126.42L878.73 125.55M887.91 123.36L895.79 123.36M901.48 118.11L900.16 118.55L899.29 119.86L898.85 122.05L898.85 123.36L899.29 125.55L900.16 126.86L901.48 127.30L902.35 127.30L903.66 126.86L904.54 125.55L904.98 123.36L904.98 122.05L904.54 119.86L903.66 118.55L902.35 118.11L901.48 118.11M911.98 118.11L907.60 124.24L914.16 124.24M911.98 118.11L911.98 127.30M915.04 130.36L922.04 130.36M928.60 122.49L927.73 121.61L926.85 121.17L925.54 121.17L924.66 121.61L923.79 122.49L923.35 123.80L923.35 124.67L923.79 125.99L924.66 126.86L925.54 127.30L926.85 127.30L927.73 126.86L928.60 125.99M933.41 121.17L932.54 121.61L931.66 122.49L931.23 123.80L931.23 124.67L931.66 125.99L932.54 126.86L933.41 127.30L934.73 127.30L935.60 126.86L936.48 125.99L936.91 124.67L936.91 123.80L936.48 122.49L935.60 121.61L934.73 121.17L933.41 121.17M939.98 121.17L939.98 127.30M939.98 123.80L940.41 122.49L941.29 121.61L942.16 121.17L943.48 121.17M945.66 121.17L945.66 127.30M945.66 123.80L946.10 122.49L946.98 121.61L947.85 121.17L949.16 121.17M951.35 120.30L951.35 119.86L951.79 118.99L952.23 118.55L953.10 118.11L954.85 118.11L955.73 118.55L956.16 118.99L956.60 119.86L956.60 120.74L956.16 121.61L955.29 122.92L950.91 127.30L957.04 127.30M960.54 126.42L960.10 126.86L960.54 127.30L960.98 126.86L960.54 126.42M967.10 118.11L966.23 118.11L965.35 118.55L964.91 119.86L964.91 127.30M963.60 121.17L966.66 121.17M969.29 118.11L969.73 118.55L970.16 118.11L969.73 117.67L969.29 118.11M969.73 121.17L969.73 127.30M973.66 118.11L973.66 125.55L974.10 126.86L974.98 127.30L975.85 127.30M972.35 121.17L975.41 121.17M982.85 122.49L982.41 121.61L981.10 121.17L979.79 121.17L978.48 121.61L978.04 122.49L978.48 123.36L979.35 123.80L981.54 124.24L982.41 124.67L982.85 125.55L982.85 125.99L982.41 126.86L981.10 127.30L979.79 127.30L978.48 126.86L978.04 125.99M992.91 123.36L1000.79 123.36M1013.91 118.11L1013.04 118.11L1012.16 118.55L1011.73 119.86L1011.73 127.30M1010.41 121.17L1013.48 121.17M1016.10 118.11L1016.54 118.55L1016.98 118.11L1016.54 117.67L1016.10 118.11M1016.54 121.17L1016.54 127.30M1020.04 121.17L1020.04 127.30M1020.04 122.92L1021.35 121.61L1022.23 121.17L1023.54 121.17L1024.41 121.61L1024.85 122.92L1024.85 127.30M1033.16 121.17L1033.16 127.30M1033.16 122.49L1032.29 121.61L1031.41 121.17L1030.10 121.17L1029.22 121.61L1028.35 122.49L1027.91 123.80L1027.91 124.67L1028.35 125.99L1029.22 126.86L1030.10 127.30L1031.41 127.30L1032.29 126.86L1033.16 125.99M1036.66 118.11L1036.66 127.30M1047.16 121.17L1047.16 127.30M1047.16 122.92L1048.47 121.61L1049.35 121.17L1050.66 121.17L1051.54 121.61L1051.97 122.92L1051.97 127.30M1051.97 122.92L1053.29 121.61L1054.16 121.17L1055.47 121.17L1056.35 121.61L1056.79 122.92L1056.79 127.30M1062.04 121.17L1061.16 121.61L1060.29 122.49L1059.85 123.80L1059.85 124.67L1060.29 125.99L1061.16 126.86L1062.04 127.30L1063.35 127.30L1064.22 126.86L1065.10 125.99L1065.54 124.67L1065.54 123.80L1065.10 122.49L1064.22 121.61L1063.35 121.17L1062.04 121.17M1073.41 118.11L1073.41 127.30M1073.41 122.49L1072.54 121.61L1071.66 121.17L1070.35 121.17L1069.47 121.61L1068.60 122.49L1068.16 123.80L1068.16 124.67L1068.60 125.99L1069.47 126.86L1070.35 127.30L1071.66 127.30L1072.54 126.86L1073.41 125.99M1076.47 123.80L1081.72 123.80L1081.72 122.92L1081.29 122.05L1080.85 121.61L1079.97 121.17L1078.66 121.17L1077.79 121.61L1076.91 122.49L1076.47 123.80L1076.47 124.67L1076.91 125.99L1077.79 126.86L1078.66 127.30L1079.97 127.30L1080.85 126.86L1081.72 125.99M1084.79 118.11L1084.79 127.30M1088.72 121.17L1088.29 121.61L1088.72 122.05L1089.16 121.61L1088.72 121.17M1088.72 126.42L1088.29 126.86L1088.72 127.30L1089.16 126.86L1088.72 126.42M1104.47 121.17L1104.47 127.30M1104.47 122.49L1103.60 121.61L1102.72 121.17L1101.41 121.17L1100.54 121.61L1099.66 122.49L1099.22 123.80L1099.22 124.67L1099.66 125.99L1100.54 126.86L1101.41 127.30L1102.72 127.30L1103.60 126.86L1104.47 125.99M1107.97 118.11L1107.97 127.30M1111.47 121.17L1111.47 130.36M1111.47 122.49L1112.35 121.61L1113.22 121.17L1114.54 121.17L1115.41 121.61L1116.29 122.49L1116.72 123.80L1116.72 124.67L1116.29 125.99L1115.41 126.86L1114.54 127.30L1113.22 127.30L1112.35 126.86L1111.47 125.99M1129.85 116.36L1128.97 117.24L1128.10 118.55L1127.22 120.30L1126.79 122.49L1126.79 124.24L1127.22 126.42L1128.10 128.18L1128.97 129.49L1129.85 130.36"/><path d="M574.49 607.11L570.12 613.24L576.68 613.24M574.49 607.11L574.49 616.30M718.59 607.11L714.21 607.11L713.77 611.05L714.21 610.61L715.52 610.17L716.84 610.17L718.15 610.61L719.02 611.49L719.46 612.80L719.46 613.67L719.02 614.99L718.15 615.86L716.84 616.30L715.52 616.30L714.21 615.86L713.77 615.42L713.34 614.55M861.81 608.42L861.37 607.55L860.06 607.11L859.18 607.11L857.87 607.55L856.99 608.86L856.56 611.05L856.56 613.24L856.99 614.99L857.87 615.86L859.18 616.30L859.62 616.30L860.93 615.86L861.81 614.99L862.24 613.67L862.24 613.24L861.81 611.92L860.93 611.05L859.62 610.61L859.18 610.61L857.87 611.05L856.99 611.92L856.56 613.24M1005.46 607.11L1001.09 616.30M999.34 607.11L1005.46 607.11M744.30 635.61L744.30 644.80M744.30 635.61L748.24 635.61L749.55 636.05L749.99 636.49L750.42 637.36L750.42 638.24L749.99 639.11L749.55 639.55L748.24 639.99M744.30 639.99L748.24 639.99L749.55 640.42L749.99 640.86L750.42 641.74L750.42 643.05L749.99 643.92L749.55 644.36L748.24 644.80L744.30 644.80M758.30 638.67L758.30 644.80M758.30 639.99L757.42 639.11L756.55 638.67L755.24 638.67L754.36 639.11L753.49 639.99L753.05 641.30L753.05 642.17L753.49 643.49L754.36 644.36L755.24 644.80L756.55 644.80L757.42 644.36L758.30 643.49M766.17 639.99L765.74 639.11L764.42 638.67L763.11 638.67L761.80 639.11L761.36 639.99L761.80 640.86L762.67 641.30L764.86 641.74L765.74 642.17L766.17 643.05L766.17 643.49L765.74 644.36L764.42 644.80L763.11 644.80L761.80 644.36L761.36 643.49M768.80 641.30L774.05 641.30L774.05 640.42L773.61 639.55L773.17 639.11L772.30 638.67L770.99 638.67L770.11 639.11L769.24 639.99L768.80 641.30L768.80 642.17L769.24 643.49L770.11 644.36L770.99 644.80L772.30 644.80L773.17 644.36L774.05 643.49M777.11 635.61L777.11 644.80M780.17 635.61L780.61 636.05L781.05 635.61L780.61 635.17L780.17 635.61M780.61 638.67L780.61 644.80M784.11 638.67L784.11 644.80M784.11 640.42L785.42 639.11L786.30 638.67L787.61 638.67L788.49 639.11L788.92 640.42L788.92 644.80M791.99 641.30L797.24 641.30L797.24 640.42L796.80 639.55L796.36 639.11L795.49 638.67L794.17 638.67L793.30 639.11L792.42 639.99L791.99 641.30L791.99 642.17L792.42 643.49L793.30 644.36L794.17 644.80L795.49 644.80L796.36 644.36L797.24 643.49M814.30 633.86L806.42 647.86M816.92 635.61L816.92 644.80M816.92 635.61L820.42 644.80M823.92 635.61L820.42 644.80M823.92 635.61L823.92 644.80M826.55 635.61L827.42 635.61L828.30 636.05L828.74 636.92L831.80 644.80M829.17 638.67L826.55 644.80"/><path transform="translate(493.3,224.9) rotate(-90)" d="M-11.38 -9.19L-12.69 -8.75L-13.56 -7.44L-14.00 -5.25L-14.00 -3.94L-13.56 -1.75L-12.69 -0.44L-11.38 0.00L-10.50 0.00L-9.19 -0.44L-8.31 -1.75L-7.88 -3.94L-7.88 -5.25L-8.31 -7.44L-9.19 -8.75L-10.50 -9.19L-11.38 -9.19M-4.38 -0.88L-4.81 -0.44L-4.38 0.00L-3.94 -0.44L-4.38 -0.88M1.75 -9.19L0.44 -8.75L-0.44 -7.44L-0.88 -5.25L-0.88 -3.94L-0.44 -1.75L0.44 -0.44L1.75 0.00L2.62 0.00L3.94 -0.44L4.81 -1.75L5.25 -3.94L5.25 -5.25L4.81 -7.44L3.94 -8.75L2.62 -9.19L1.75 -9.19M10.06 -9.19L8.75 -8.75L8.31 -7.88L8.31 -7.00L8.75 -6.12L9.62 -5.69L11.38 -5.25L12.69 -4.81L13.56 -3.94L14.00 -3.06L14.00 -1.75L13.56 -0.88L13.12 -0.44L11.81 0.00L10.06 0.00L8.75 -0.44L8.31 -0.88L7.88 -1.75L7.88 -3.06L8.31 -3.94L9.19 -4.81L10.50 -5.25L12.25 -5.69L13.12 -6.12L13.56 -7.00L13.56 -7.88L13.12 -8.75L11.81 -9.19L10.06 -9.19"/><path transform="translate(493.3,318.5) rotate(-90)" d="M-11.38 -9.19L-12.69 -8.75L-13.56 -7.44L-14.00 -5.25L-14.00 -3.94L-13.56 -1.75L-12.69 -0.44L-11.38 0.00L-10.50 0.00L-9.19 -0.44L-8.31 -1.75L-7.88 -3.94L-7.88 -5.25L-8.31 -7.44L-9.19 -8.75L-10.50 -9.19L-11.38 -9.19M-4.38 -0.88L-4.81 -0.44L-4.38 0.00L-3.94 -0.44L-4.38 -0.88M1.75 -9.19L0.44 -8.75L-0.44 -7.44L-0.88 -5.25L-0.88 -3.94L-0.44 -1.75L0.44 -0.44L1.75 0.00L2.62 0.00L3.94 -0.44L4.81 -1.75L5.25 -3.94L5.25 -5.25L4.81 -7.44L3.94 -8.75L2.62 -9.19L1.75 -9.19M13.56 -7.88L13.12 -8.75L11.81 -9.19L10.94 -9.19L9.62 -8.75L8.75 -7.44L8.31 -5.25L8.31 -3.06L8.75 -1.31L9.62 -0.44L10.94 0.00L11.38 0.00L12.69 -0.44L13.56 -1.31L14.00 -2.62L14.00 -3.06L13.56 -4.38L12.69 -5.25L11.38 -5.69L10.94 -5.69L9.62 -5.25L8.75 -4.38L8.31 -3.06"/><path transform="translate(493.3,412.1) rotate(-90)" d="M-11.59 -9.19L-12.91 -8.75L-13.78 -7.44L-14.22 -5.25L-14.22 -3.94L-13.78 -1.75L-12.91 -0.44L-11.59 0.00L-10.72 0.00L-9.41 -0.44L-8.53 -1.75L-8.09 -3.94L-8.09 -5.25L-8.53 -7.44L-9.41 -8.75L-10.72 -9.19L-11.59 -9.19M-4.59 -0.88L-5.03 -0.44L-4.59 0.00L-4.16 -0.44L-4.59 -0.88M1.53 -9.19L0.22 -8.75L-0.66 -7.44L-1.09 -5.25L-1.09 -3.94L-0.66 -1.75L0.22 -0.44L1.53 0.00L2.41 0.00L3.72 -0.44L4.59 -1.75L5.03 -3.94L5.03 -5.25L4.59 -7.44L3.72 -8.75L2.41 -9.19L1.53 -9.19M12.03 -9.19L7.66 -3.06L14.22 -3.06M12.03 -9.19L12.03 0.00"/><path transform="translate(493.3,505.7) rotate(-90)" d="M-11.38 -9.19L-12.69 -8.75L-13.56 -7.44L-14.00 -5.25L-14.00 -3.94L-13.56 -1.75L-12.69 -0.44L-11.38 0.00L-10.50 0.00L-9.19 -0.44L-8.31 -1.75L-7.88 -3.94L-7.88 -5.25L-8.31 -7.44L-9.19 -8.75L-10.50 -9.19L-11.38 -9.19M-4.38 -0.88L-4.81 -0.44L-4.38 0.00L-3.94 -0.44L-4.38 -0.88M1.75 -9.19L0.44 -8.75L-0.44 -7.44L-0.88 -5.25L-0.88 -3.94L-0.44 -1.75L0.44 -0.44L1.75 0.00L2.62 0.00L3.94 -0.44L4.81 -1.75L5.25 -3.94L5.25 -5.25L4.81 -7.44L3.94 -8.75L2.62 -9.19L1.75 -9.19M8.31 -7.00L8.31 -7.44L8.75 -8.31L9.19 -8.75L10.06 -9.19L11.81 -9.19L12.69 -8.75L13.12 -8.31L13.56 -7.44L13.56 -6.56L13.12 -5.69L12.25 -4.38L7.88 0.00L14.00 0.00"/><path transform="translate(471.5,377.3) rotate(-90)" d="M-50.31 -7.88L-51.19 -8.75L-52.50 -9.19L-54.25 -9.19L-55.56 -8.75L-56.44 -7.88L-56.44 -7.00L-56.00 -6.12L-55.56 -5.69L-54.69 -5.25L-52.06 -4.38L-51.19 -3.94L-50.75 -3.50L-50.31 -2.62L-50.31 -1.31L-51.19 -0.44L-52.50 0.00L-54.25 0.00L-55.56 -0.44L-56.44 -1.31M-42.44 -6.12L-42.44 3.06M-42.44 -4.81L-43.31 -5.69L-44.19 -6.12L-45.50 -6.12L-46.38 -5.69L-47.25 -4.81L-47.69 -3.50L-47.69 -2.62L-47.25 -1.31L-46.38 -0.44L-45.50 0.00L-44.19 0.00L-43.31 -0.44L-42.44 -1.31M-38.94 -6.12L-38.94 -1.75L-38.50 -0.44L-37.62 0.00L-36.31 0.00L-35.44 -0.44L-34.12 -1.75M-34.12 -6.12L-34.12 0.00M-25.81 -6.12L-25.81 0.00M-25.81 -4.81L-26.69 -5.69L-27.56 -6.12L-28.88 -6.12L-29.75 -5.69L-30.62 -4.81L-31.06 -3.50L-31.06 -2.62L-30.62 -1.31L-29.75 -0.44L-28.88 0.00L-27.56 0.00L-26.69 -0.44L-25.81 -1.31M-22.31 -6.12L-22.31 0.00M-22.31 -3.50L-21.88 -4.81L-21.00 -5.69L-20.12 -6.12L-18.81 -6.12M-17.06 -3.50L-11.81 -3.50L-11.81 -4.38L-12.25 -5.25L-12.69 -5.69L-13.56 -6.12L-14.88 -6.12L-15.75 -5.69L-16.62 -4.81L-17.06 -3.50L-17.06 -2.62L-16.62 -1.31L-15.75 -0.44L-14.88 0.00L-13.56 0.00L-12.69 -0.44L-11.81 -1.31M-3.94 -9.19L-3.94 0.00M-3.94 -4.81L-4.81 -5.69L-5.69 -6.12L-7.00 -6.12L-7.88 -5.69L-8.75 -4.81L-9.19 -3.50L-9.19 -2.62L-8.75 -1.31L-7.88 -0.44L-7.00 0.00L-5.69 0.00L-4.81 -0.44L-3.94 -1.31M5.69 -6.12L8.31 0.00M10.94 -6.12L8.31 0.00M13.12 -9.19L13.56 -8.75L14.00 -9.19L13.56 -9.62L13.12 -9.19M13.56 -6.12L13.56 0.00M21.44 -4.81L21.00 -5.69L19.69 -6.12L18.38 -6.12L17.06 -5.69L16.62 -4.81L17.06 -3.94L17.94 -3.50L20.12 -3.06L21.00 -2.62L21.44 -1.75L21.44 -1.31L21.00 -0.44L19.69 0.00L18.38 0.00L17.06 -0.44L16.62 -1.31M24.06 -9.19L24.50 -8.75L24.94 -9.19L24.50 -9.62L24.06 -9.19M24.50 -6.12L24.50 0.00M28.00 -9.19L28.00 0.00M28.00 -4.81L28.88 -5.69L29.75 -6.12L31.06 -6.12L31.94 -5.69L32.81 -4.81L33.25 -3.50L33.25 -2.62L32.81 -1.31L31.94 -0.44L31.06 0.00L29.75 0.00L28.88 -0.44L28.00 -1.31M35.88 -9.19L36.31 -8.75L36.75 -9.19L36.31 -9.62L35.88 -9.19M36.31 -6.12L36.31 0.00M39.81 -9.19L39.81 0.00M42.88 -9.19L43.31 -8.75L43.75 -9.19L43.31 -9.62L42.88 -9.19M43.31 -6.12L43.31 0.00M47.25 -9.19L47.25 -1.75L47.69 -0.44L48.56 0.00L49.44 0.00M45.94 -6.12L49.00 -6.12M51.19 -6.12L53.81 0.00M56.44 -6.12L53.81 0.00L52.94 1.75L52.06 2.62L51.19 3.06L50.75 3.06"/></g></svg>
</div>
<div id="tb">
<div style="position:absolute;left:0px;top:817px;width:1151px;height:45px;background:#dbddda"></div>
<div style="position:absolute;left:0px;top:817px;width:1151px;height:2px;background:#fbfbfb"></div>
<div style="position:absolute;left:0px;top:860px;width:1151px;height:2px;background:#3a3a3a"></div>
<svg style="position:absolute;left:1px;top:819px" width="12" height="8"><path d="M1.5 6.5L5.5 2L9.5 6.5Z" fill="#000"/></svg>
<svg style="position:absolute;left:0;top:817px" width="1151" height="45" viewBox="0 817 1151 45"><g transform="translate(22,838.5)">
<g fill="#f2f2f2" stroke="#111" stroke-width="1"><rect x="-2.6" y="-15" width="5.2" height="8" rx="1.4" transform="rotate(-90)"/><rect x="-2.6" y="-15" width="5.2" height="8" rx="1.4" transform="rotate(-45)"/><rect x="-2.6" y="-15" width="5.2" height="8" rx="1.4" transform="rotate(0)"/><rect x="-2.6" y="-15" width="5.2" height="8" rx="1.4" transform="rotate(45)"/><rect x="-2.6" y="-15" width="5.2" height="8" rx="1.4" transform="rotate(90)"/><rect x="-2.6" y="-15" width="5.2" height="8" rx="1.4" transform="rotate(135)"/><rect x="-2.6" y="-15" width="5.2" height="8" rx="1.4" transform="rotate(180)"/><rect x="-2.6" y="-15" width="5.2" height="8" rx="1.4" transform="rotate(225)"/></g>
<circle r="9.2" fill="#f0f0f0" stroke="#111" stroke-width="1"/>
<circle r="6.8" fill="#e9a050" stroke="#bbb" stroke-width="0.8"/>
</g>
<path d="M19 823.5H24.5V831L31 823.5H38.5L29.5 834L38 845H30.5L24.5 837.5V845H19Z" fill="#fff" stroke="#111" stroke-width="1.4" stroke-linejoin="round"/><g>
<path d="M49 843l14-11 17 8-14 12z" fill="#f2f2f2" stroke="#333" stroke-width="1"/>
<path d="M49 843v3l17 9 14-12v-3l-14 12z" fill="#9a9a9a" stroke="#333" stroke-width="1"/>
<path d="M57 841l9-7 8 4" fill="#f0c890" opacity="0.9"/>
<rect x="69" y="838" width="2.5" height="9" fill="#ff8c20"/>
<path d="M63 833c0-3 2-4 2-9h2c0 5 2 6 3 9z" fill="#666" stroke="#222" stroke-width="0.8"/>
<path d="M69 829l11 3-3 4-8-3" fill="none" stroke="#222" stroke-width="1"/>
<circle cx="76" cy="837" r="2" fill="#c8b050" stroke="#333" stroke-width="0.6"/></g><g>
<rect x="90.5" y="823.5" width="29" height="27" rx="1" fill="#d8d8d8" stroke="#111" stroke-width="1.2"/>
<rect x="94" y="827" width="22" height="19" fill="#4a4a4a"/>
<path d="M96 831l3 1.5-3 1.5M100 834h3" stroke="#ddd" stroke-width="0.8" fill="none"/>
<rect x="95" y="847" width="3" height="1.5" fill="#3c3"/>
<g fill="#f7e2ae" stroke="#5a3a10" stroke-width="0.8"><ellipse cx="103.9" cy="848.3" rx="2.7" ry="7.5" transform="rotate(-62 103.9 848.3)"/><ellipse cx="118.1" cy="848.3" rx="2.7" ry="7.5" transform="rotate(62 118.1 848.3)"/><ellipse cx="105.8" cy="845.7" rx="2.7" ry="7.5" transform="rotate(-41 105.8 845.7)"/><ellipse cx="116.2" cy="845.7" rx="2.7" ry="7.5" transform="rotate(41 116.2 845.7)"/><ellipse cx="108.3" cy="844.0" rx="2.7" ry="7.5" transform="rotate(-20 108.3 844.0)"/><ellipse cx="113.7" cy="844.0" rx="2.7" ry="7.5" transform="rotate(20 113.7 844.0)"/><ellipse cx="111.0" cy="843.5" rx="2.7" ry="7.5" transform="rotate(0 111.0 843.5)"/></g><ellipse cx="111" cy="851.5" rx="3.5" ry="2.5" fill="#f2c878"/></g><g>
<rect x="137" y="849" width="22" height="5" fill="#d0d0d0" stroke="#111" stroke-width="1"/>
<rect x="143" y="846" width="10" height="4" fill="#999"/>
<rect x="132.5" y="823.5" width="31" height="24" rx="1" fill="#dcdcdc" stroke="#111" stroke-width="1.2"/>
<rect x="148" y="826" width="13" height="19" fill="#111"/>
<rect x="133" y="824" width="15" height="23" fill="#3aa63a" stroke="#111" stroke-width="0.6"/>
<path d="M136 828h5v6h3M136 832h4v9M137 843h8" stroke="#e0e070" stroke-width="0.8" fill="none"/>
<rect x="141" y="828" width="3" height="3" fill="#444"/><rect x="138" y="834" width="3" height="3" fill="#444"/><rect x="142" y="842" width="3" height="3" fill="#444"/>
<g><rect x="149" y="828" width="2" height="3" fill="#0cc"/><rect x="152" y="828" width="2" height="3" fill="#0c0"/><rect x="155" y="828" width="2" height="3" fill="#fa0"/><rect x="158" y="828" width="2" height="3" fill="#f30"/>
<rect x="149" y="832" width="2" height="3" fill="#0cc"/><rect x="152" y="832" width="2" height="3" fill="#0c0"/><rect x="155" y="832" width="2" height="3" fill="#fd0"/><rect x="158" y="832" width="2" height="3" fill="#f30"/>
<rect x="149" y="836" width="2" height="3" fill="#0ee"/><rect x="152" y="836" width="2" height="3" fill="#0d0"/><rect x="155" y="836" width="2" height="3" fill="#fd0"/><rect x="158" y="836" width="2" height="3" fill="#f44"/>
<rect x="149" y="840" width="2" height="3" fill="#cfc"/><rect x="152" y="840" width="2" height="3" fill="#ffc"/><rect x="155" y="840" width="2" height="3" fill="#ffc"/><rect x="158" y="840" width="2" height="3" fill="#fcc"/></g></g><g transform="translate(190,838.5)">
<circle r="14.5" fill="none" stroke="#222" stroke-width="0.8" stroke-dasharray="1.5 1.5"/>
<circle r="11" fill="none" stroke="#f4f4f4" stroke-width="6"/>
<path d="M-0.96 -10.96A11 11 0 0 1 7.78 -7.78M10.96 -0.96A11 11 0 0 1 7.78 7.78M0.96 10.96A11 11 0 0 1 -7.78 7.78M-10.96 0.96A11 11 0 0 1 -7.78 -7.78" fill="none" stroke="#c83030" stroke-width="6"/>
<circle r="14" fill="none" stroke="#555" stroke-width="0.8"/><circle r="8" fill="none" stroke="#777" stroke-width="0.8"/></g><g>
<path d="M221 825l26 5v24l-26-5z" fill="#e8eef4" stroke="#222" stroke-width="1"/>
<path d="M223 827l23 4v14l-23-6z" fill="#2a90c8"/>
<path d="M230 838l4-5 2 4 4-3-1 5 5 1-4 3 3 4z" fill="#dff"/>
<path d="M216 845l10-8 10 8" fill="#ddd" stroke="#222" stroke-width="1.2"/>
<rect x="219" y="844" width="14" height="10" fill="#f4f4f4" stroke="#222" stroke-width="1"/>
<rect x="224" y="846" width="4" height="8" fill="#c0601a"/></g><g transform="translate(275.5,837)">
<path d="M-2.5-15h5l1 4 3.5 1.5 3.5-2.2 3.5 3.5-2.2 3.5 1.5 3.5 4 1v5l-4 1-1.5 3.5 2.2 3.5-3.5 3.5-3.5-2.2-3.5 1.5-1 4h-5l-1-4-3.5-1.5-3.5 2.2-3.5-3.5 2.2-3.5-1.5-3.5-4-1v-5l4-1 1.5-3.5-2.2-3.5 3.5-3.5 3.5 2.2 3.5-1.5z" fill="#eee" stroke="#333" stroke-width="0.8"/>
<circle r="10.5" fill="#2f6fc0" stroke="#223" stroke-width="0.8"/>
<path d="M-7-5c3-3 6-3 8-2 1 2-1 5-4 6-1 2-3 1-4-1z" fill="#c9a860"/>
<path d="M2 3c2-1 4 0 4 2s-2 4-4 3z" fill="#a89050"/>
<path d="M10 10l7 7" stroke="#a08030" stroke-width="1.5"/></g><path d="M296 825L300 820.5L304 825Z" fill="#000"/><g>
<path d="M303 832l14-6 14 6-14 6z" fill="#8a8a30"/>
<path d="M303 832v16l14 7v-17z" fill="#f0ee90" stroke="#111" stroke-width="1"/>
<path d="M317 838v17l14-7v-16z" fill="#c8c040" stroke="#111" stroke-width="1"/>
<path d="M303 832l-2-3 12-5 4 2M331 832l2-3-10-5-6 2" fill="#f4f0a8" stroke="#111" stroke-width="1"/>
<path d="M331 848l3 2-3 2z" fill="#111"/></g><g>
<path d="M343 825v30h31z" fill="#2f6aa0"/>
<path d="M343 828h30M343 832h30M343 836h30M343 840h30M343 844h30M343 848h30M343 852h30" stroke="#5a90c0" stroke-width="1" opacity="0.7"/>
<g transform="translate(359,840)">
<path d="M-12 -12L12 12M12 -12L-12 12" stroke="#b06040" stroke-width="3"/>
<path d="M0 -16V16M-16 0H16" stroke="#f0e8d0" stroke-width="3"/>
<circle r="10" fill="none" stroke="#e8dcb8" stroke-width="3"/>
<circle r="3.5" fill="#e8dcb8"/></g></g></svg>
<div style="position:absolute;left:384px;top:821px;width:1px;height:38px;background:#6a6a6a"></div>
<div style="position:absolute;left:387px;top:821px;width:1px;height:38px;background:#6a6a6a"></div>
<div style="position:absolute;left:419px;top:821px;width:1px;height:38px;background:#6a6a6a"></div>
<div style="position:absolute;left:422px;top:821px;width:1px;height:38px;background:#6a6a6a"></div>
<div style="position:absolute;left:935px;top:821px;width:1px;height:38px;background:#6a6a6a"></div>
<div style="position:absolute;left:938px;top:821px;width:1px;height:38px;background:#6a6a6a"></div>
<div style="position:absolute;left:1064px;top:821px;width:1px;height:38px;background:#6a6a6a"></div>
<div style="position:absolute;left:1067px;top:821px;width:1px;height:38px;background:#6a6a6a"></div>
<div style="position:absolute;left:385px;top:821px;width:2px;height:38px;background:#fff"></div>
<div style="position:absolute;left:420px;top:821px;width:2px;height:38px;background:#fff"></div>
<div style="position:absolute;left:936px;top:821px;width:2px;height:38px;background:#fff"></div>
<div style="position:absolute;left:1065px;top:821px;width:2px;height:38px;background:#fff"></div>
<div style="position:absolute;left:389px;top:819px;width:28px;height:41px;background:#000"></div>
<div style="position:absolute;left:390px;top:820px;width:26px;height:19px;background:#fff"></div>
<div style="position:absolute;left:391px;top:823px;width:9px;height:15px;background:#0f6396"></div>
<div style="position:absolute;left:400px;top:823px;width:15px;height:12px;background:#555"></div>
<div style="position:absolute;left:401px;top:824px;width:13px;height:10px;background:#e6e6e6"></div>
<div style="position:absolute;left:400px;top:834px;width:2px;height:2px;background:#fff"></div>
<div style="position:absolute;left:390px;top:841px;width:26px;height:19px;background:#4b4b4b"></div>
<div style="position:absolute;left:390px;top:839px;width:26px;height:1px;background:#000"></div>
<div style="position:absolute;left:390px;top:840px;width:26px;height:1px;background:#fff"></div>
<div class="t" style="left:403px;top:847.69px;font-size:11px;color:#fff;font-weight:700;font-family:'Liberation Sans', sans-serif;transform:translateX(-50%)">2</div>
<svg style="position:absolute;left:425px;top:819px" width="12" height="9"><path d="M1 7L5 2.5L9 7Z" fill="#000"/></svg>
<div style="position:absolute;left:424px;top:819px;width:13px;height:41px;background:#ececec;z-index:-1"></div>
<div style="position:absolute;left:437px;top:819px;width:401px;height:41px;background:#202020"></div>
<div style="position:absolute;left:438px;top:820px;width:198px;height:18px;border-top:1px solid #fff;border-left:1px solid #fff;background:linear-gradient(#f2f2f2,#d4d4d4)"></div>
<div style="position:absolute;left:438px;top:840px;width:198px;height:18px;border-top:1px solid #fff;border-left:1px solid #fff;background:linear-gradient(#f2f2f2,#d4d4d4)"></div>
<div style="position:absolute;left:638px;top:820px;width:199px;height:19px;background:#b9bab8"></div>
<div style="position:absolute;left:638px;top:840px;width:198px;height:18px;border-top:1px solid #fff;border-left:1px solid #fff;background:linear-gradient(#f2f2f2,#d4d4d4)"></div>
<svg style="position:absolute;left:0;top:817px" width="1151" height="45" viewBox="0 817 1151 45">
<rect x="442.5" y="823.5" width="15" height="13" rx="1" fill="#ddd" stroke="#333" stroke-width="1"/>
<rect x="444" y="825" width="12" height="10" fill="#222"/><rect x="445" y="826" width="4" height="3" fill="#666"/>
<path d="M444 843L456 857" stroke="#000" stroke-width="2.6"/><path d="M456 843L444 857" stroke="#000" stroke-width="1"/>
<path d="M645 823L657 837" stroke="#000" stroke-width="2.6"/><path d="M657 823L645 837" stroke="#000" stroke-width="1"/>
<path d="M644 843L656 857" stroke="#000" stroke-width="2.6"/><path d="M656 843L644 857" stroke="#000" stroke-width="1"/>
</svg>
<div class="t" style="left:460px;top:824.72px;font-size:10.6px;color:#000;font-weight:400;font-family:'Liberation Sans', sans-serif;">(jsy1001@cstdev.ra.phy.cam.ac.uk&#160;&#160;–</div>
<div style="position:absolute;left:627px;top:825px;width:1px;height:10px;background:#aaa"></div>
<div class="t" style="left:460px;top:843.42px;font-size:10.6px;color:#000;font-weight:400;font-family:'Liberation Sans', sans-serif;">(PGPLOT Server)</div>
<div class="t" style="left:660.7px;top:824.72px;font-size:10.6px;color:#000;font-weight:400;font-family:'Liberation Sans', sans-serif;">fitgui 1.1</div>
<div class="t" style="left:660.7px;top:843.42px;font-size:10.6px;color:#000;font-weight:400;font-family:'Liberation Sans', sans-serif;">PGPLOT Window 1</div>
<div style="position:absolute;left:838px;top:819px;width:92px;height:40px;border-right:1px solid #fff;border-bottom:1px solid #fff;background:#dbddda"></div>
<div style="position:absolute;left:940px;top:819px;width:22px;height:41px;background:#d4d4d4"></div>
<div style="position:absolute;left:940px;top:839px;width:22px;height:1px;background:#555"></div>
<div style="position:absolute;left:940px;top:840px;width:22px;height:1px;background:#fff"></div>
<svg style="position:absolute;left:940px;top:819px" width="22" height="41">
<path d="M7.5 8V5.5a3.5 3.5 0 0 1 7 0V8" fill="none" stroke="#777" stroke-width="1.8"/>
<rect x="5" y="8" width="12" height="9" rx="1.5" fill="#d8cfa0" stroke="#6a6040" stroke-width="1"/>
<rect x="6" y="11" width="10" height="4" fill="#f0f0f0" opacity="0.7"/>
<path d="M7.5 29.5a5 5 0 1 0 7 0" fill="none" stroke="#000" stroke-width="2.2"/>
<path d="M11 25.5v6" stroke="#000" stroke-width="2.4"/></svg>
<div style="position:absolute;left:962px;top:819px;width:101px;height:40px;border-left:1px solid #555;border-top:1px solid #555;background:#dbddda"></div>
<svg style="position:absolute;left:962px;top:817px" width="102" height="45">
<rect x="6.5" y="13.5" width="17" height="19" rx="1.5" fill="#ff8a10" stroke="#111" stroke-width="1.2"/>
<rect x="9.5" y="15.5" width="11" height="15" fill="#fafafa" stroke="#111" stroke-width="1"/>
<path d="M11 13l1.5 2.5h5L19 13z" fill="#ddd" stroke="#111" stroke-width="0.8"/>
<path d="M12 18.5h6M12 20.5h5" stroke="#111" stroke-width="1"/>
<path d="M12.5 23v5.5M12.5 26l4-3M13.5 25.2l3 3.3" stroke="#111" stroke-width="1.1" fill="none"/>
<rect x="27.5" y="13.5" width="17" height="17" fill="#fff" stroke="#111" stroke-width="1"/>
<rect x="28" y="14" width="16" height="3" fill="#1020e0"/>
<path d="M28 20.5h16M28 24h16M28 27.5h16M31.5 17v13M35 17v13M38.5 17v13M42 17v13" stroke="#bbb" stroke-width="1"/>
<path d="M36 30l3.5-7 4 7z" fill="#f0e000" stroke="#c02020" stroke-width="0.8"/>
<rect x="30" y="31" width="16" height="2" fill="#999"/><rect x="45" y="15" width="2" height="17" fill="#999"/>
</svg>
<div style="position:absolute;left:1012px;top:828px;width:22px;height:22px;border-top:1px solid #fff;border-left:1px solid #fff;border-right:1px solid #222;border-bottom:1px solid #222;background:linear-gradient(#f0f0f0,#d0d0d0)"></div>
<div class="t" style="left:1019.5px;top:833.99px;font-size:13px;color:#000;font-weight:400;font-family:'Liberation Sans', sans-serif;">3</div>
<div style="position:absolute;left:1036px;top:828px;width:22px;height:22px;border-top:1px solid #fff;border-left:1px solid #fff;border-right:1px solid #222;border-bottom:1px solid #222;background:linear-gradient(#f0f0f0,#d0d0d0)"></div>
<div class="t" style="left:1043.5px;top:833.99px;font-size:13px;color:#000;font-weight:400;font-family:'Liberation Sans', sans-serif;">2</div>
<div style="position:absolute;left:1068px;top:819px;width:69px;height:41px;background:#dbddda"></div>
<div style="position:absolute;left:1069px;top:819px;width:67px;height:28px;background:repeating-linear-gradient(#c2c2b6 0 1px,#a8a8a0 1px 2px);"></div>
<svg style="position:absolute;left:1069px;top:819px" width="67" height="28">
<g fill="#8a8a88" opacity="0.5"><rect x="40" y="12" width="3" height="8"/><rect x="48" y="6" width="3" height="6"/></g>
<g fill="#000">
<path d="M10 4h4v8.5h-4zM10 14h4v9h-4z"/>
<path d="M22 4h4v8.5h-4zM22 14h4v9h-4z"/>
<rect x="32" y="9" width="3" height="3"/><rect x="32" y="17" width="3" height="3"/>
<path d="M39 3.5h11.5v3h-8v5.5h8v11h-11.5v-3h8v-5h-8z"/>
<path d="M52 3.5h10.5v19.5h-10.5zM55.5 6.5v5.5h3.5v-5.5zM55.5 15v5h3.5v-5z"/>
</g></svg>
<div class="t" style="left:1074.8px;top:849.04px;font-size:10.7px;color:#000;font-weight:400;font-family:'Liberation Sans', sans-serif;">24/06/2003</div>
<div style="position:absolute;left:1137px;top:819px;width:13px;height:41px;border-left:1px solid #111;background:#d8d8d8"></div>
<div style="position:absolute;left:1138px;top:819px;width:1px;height:41px;background:#fff"></div>
<svg style="position:absolute;left:1140px;top:833px" width="11" height="12"><path d="M3 1.5L9 6L3 10.5Z" fill="#000"/></svg>
</div>
</body></html>
